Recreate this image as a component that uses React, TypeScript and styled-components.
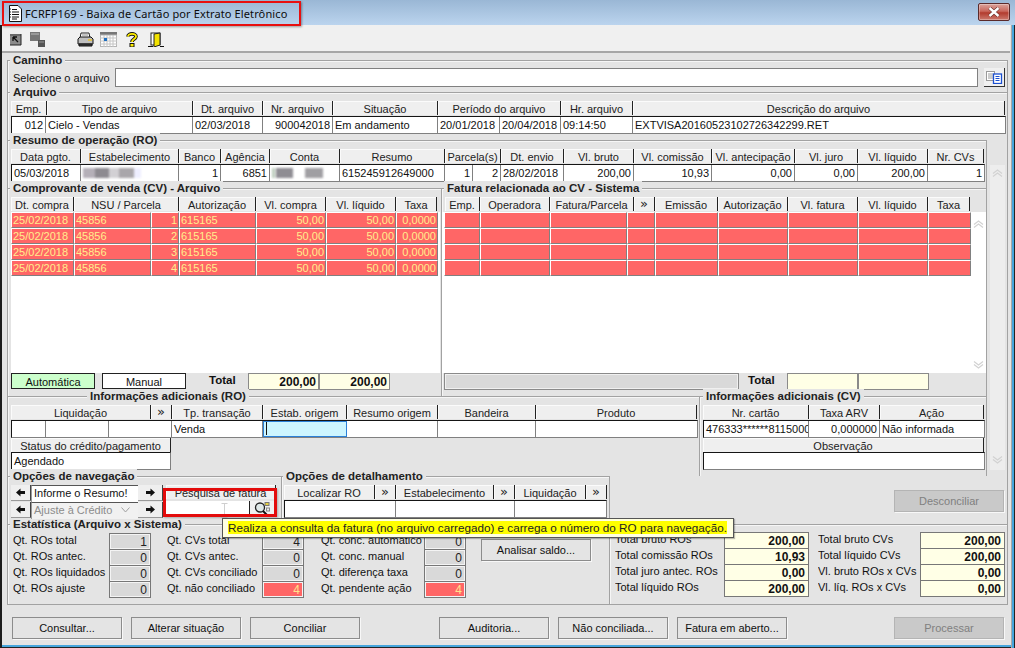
import React from "react";
import styled, { createGlobalStyle } from "styled-components";

const Global = createGlobalStyle`
  html, body { margin: 0; padding: 0; overflow: hidden; background: #e4e4e4; }
  body { font-family: "Liberation Sans", Arial, sans-serif; font-size: 11px; color: #111; }
  * { box-sizing: border-box; }
`;

const WindowFrame = styled.div`
  position: relative;
  width: 1015px;
  height: 648px;
  padding: 0 5px 3px 2px;
  background: #e4e4e4;
  overflow: hidden;
  box-shadow: inset 2px 0 #1c1c1c, inset -1px 0 #222, inset -3px 0 #45a5dc, inset -4px 0 #a8a8a8, inset 0 -1px #222, inset 0 -3px #45a5dc;
`;

const TitleBar = styled.div`
  display: flex;
  align-items: center;
  justify-content: space-between;
  height: 25px;
  margin: 0 -5px 0 -2px;
  padding: 0 5px 0 2px;
  background: linear-gradient(180deg, #9ab7d5, #bbd4ee);
`;

const TitleBox = styled.div`
  display: flex;
  align-items: center;
  gap: 3px;
  width: 299px;
  height: 25px;
  margin-top: 1px;
  padding-left: 4px;
  border: 2px solid #e81010;
  box-shadow: 1px 1px 2px rgba(0, 0, 0, 0.35);
  font-family: "Noto Sans", "Open Sans", sans-serif;
  font-size: 11px;
  letter-spacing: 0.12px;
  color: #0c0c0c;
  white-space: nowrap;
`;

const CloseButton = styled.div`
  display: flex;
  align-items: center;
  justify-content: center;
  width: 32px;
  height: 18px;
  margin-top: -1px;
  border: 1px solid #5b2a2a;
  border-radius: 2px;
  background: linear-gradient(180deg, #dba39b 0%, #c9675c 45%, #b23b2e 55%, #cc7a6e 100%);
  box-shadow: inset 0 0 0 1px rgba(255, 255, 255, 0.3);
`;

const Toolbar = styled.div`
  display: flex;
  align-items: center;
  height: 28px;
  padding-left: 7px;
  background: #f0f0f0;
  border-bottom: 2px solid #a6a6a6;
`;

const ToolSlot = styled.span<{ $gap: number }>`
  display: inline-flex;
  margin-left: ${(p) => p.$gap}px;
  margin-top: 2px;
`;

const Form = styled.div`
  padding: 7px 0 0 5px;
  width: 1006px;
`;

const Group = styled.div<{ $w?: number; $h: number; $l?: boolean; $r?: boolean; $b?: boolean }>`
  width: ${(p) => (p.$w ? `${p.$w}px` : "100%")};
  height: ${(p) => p.$h}px;
  flex: none;
  border-top: 1px solid #a2a2a2;
  border-left: ${(p) => (p.$l ? "1px solid #a2a2a2" : "0")};
  border-right: ${(p) => (p.$r ? "1px solid #a2a2a2" : "0")};
  border-bottom: ${(p) => (p.$b ? "1px solid #a2a2a2" : "0")};
  box-shadow: inset ${(p) => (p.$l ? "1px" : "0")} 1px #f6f6f6;
`;

const Legend = styled.div<{ $left?: number }>`
  display: block;
  width: fit-content;
  height: 14px;
  margin: -8px 0 0 ${(p) => p.$left ?? 2}px;
  padding: 0 3px;
  background: #e4e4e4;
  font-size: 11.5px;
  font-weight: 700;
  line-height: 14px;
  color: #222;
  white-space: nowrap;
`;

const GroupBody = styled.div<{ $x?: number }>`
  padding: 2px 0 0 ${(p) => p.$x ?? 3}px;
`;

const TotalsBody = styled.div`
  padding-left: 2px;
`;

const PathRow = styled.div`
  display: flex;
  align-items: center;
  padding: 1px 0 0 5px;
`;

const PathLabel = styled.span`
  width: 102px;
  white-space: nowrap;
`;

const PathInput = styled.div`
  width: 863px;
  height: 19px;
  background: #fff;
  border: 1px solid #808080;
`;

const PickButton = styled.div`
  display: flex;
  align-items: center;
  justify-content: center;
  width: 21px;
  height: 19px;
  margin-left: 6px;
  background: #f0f0f0;
  border-right: 1px solid #333;
  border-bottom: 1px solid #333;
`;

const HeadRow = styled.div<{ $cols: string }>`
  display: grid;
  grid-template-columns: ${(p) => p.$cols};
  height: 14px;
`;

const HeadCell = styled.div`
  height: 14px;
  overflow: hidden;
  background: #efefef;
  border-right: 1px solid #222;
  box-shadow: inset 1px 1px #fbfbfb;
  text-align: center;
  line-height: 16px;
  white-space: nowrap;
  color: #222;
`;

const MoreCell = styled(HeadCell)`
  font-family: "DejaVu Sans", sans-serif;
  font-size: 13px;
  line-height: 13px;
`;

const DataRow = styled.div<{ $cols: string; $mt?: number }>`
  display: grid;
  grid-template-columns: ${(p) => p.$cols};
  width: fit-content;
  height: 18px;
  margin-top: ${(p) => p.$mt ?? 1}px;
  background: #fff;
  border-top: 1px solid #151515;
  border-left: 1px solid #151515;
  border-right: 1px solid #808080;
  border-bottom: 1px solid #808080;
`;

const DataCell = styled.div<{ $right?: boolean }>`
  height: 16px;
  padding: 0 2px;
  overflow: hidden;
  border-right: 1px solid #808080;
  text-align: ${(p) => (p.$right ? "right" : "left")};
  line-height: 17px;
  white-space: nowrap;
  color: #111;
  &:last-child { border-right: 0; }
`;

const FocusCell = styled(DataCell)`
  background: #ccf5ff;
  outline: 1px solid #2a80d8;
  outline-offset: -1px;
  padding-left: 2px;
`;

const Caret = styled.span`
  display: block;
  width: 1px;
  height: 13px;
  margin: 1px 0 0 1px;
  background: #111;
`;

const Smear = styled.div<{ $w: number; $stops: string }>`
  width: ${(p) => p.$w}px;
  height: 10px;
  margin-top: 3px;
  background: linear-gradient(90deg, ${(p) => p.$stops});
  filter: blur(0.8px);
`;

const MainRow = styled.div`
  display: flex;
  height: 336px;
`;

const MainColumn = styled.div`
  display: flex;
  flex-direction: column;
  width: 980px;
`;

const SplitRow = styled.div`
  display: flex;
`;

const PageRail = styled.div`
  width: 21px;
  border-right: 1px solid #a2a2a2;
  padding: 25px 2px 0 2px;
`;

const PageTrack = styled.div`
  display: flex;
  flex-direction: column;
  justify-content: space-between;
  align-items: center;
  width: 15px;
  height: 305px;
  margin-left: 1px;
  padding: 4px 0 6px;
  background: #ededed;
`;

const ListArea = styled.div<{ $w: number }>`
  display: flex;
  justify-content: space-between;
  width: ${(p) => p.$w}px;
  height: 161px;
  margin-top: 1px;
  background: #fff;
`;

const ListRows = styled.div<{ $pad?: number }>`
  padding-left: ${(p) => p.$pad ?? 0}px;
`;

const ListRail = styled.div`
  display: flex;
  flex-direction: column;
  justify-content: space-between;
  align-items: center;
  width: 15px;
  padding: 8px 0 4px;
`;

const ListRow = styled.div<{ $cols: string }>`
  display: grid;
  grid-template-columns: ${(p) => p.$cols};
  height: 16px;
`;

const RedCell = styled.div<{ $right?: boolean }>`
  height: 16px;
  padding: 0 1px;
  overflow: hidden;
  background: #ff6666;
  border-style: solid;
  border-width: 1px;
  border-color: #fff #808080 #808080 #fff;
  color: #ffee8c;
  text-align: ${(p) => (p.$right ? "right" : "left")};
  line-height: 15px;
  white-space: nowrap;
`;

const TotalRow = styled.div`
  display: flex;
  align-items: flex-start;
  height: 17px;
`;

const Chip = styled.div<{ $on?: boolean }>`
  width: 84px;
  height: 16px;
  margin-right: 7px;
  background: ${(p) => (p.$on ? "#ccffcc" : "#fff")};
  border: 1px solid #222;
  text-align: center;
  line-height: 16px;
`;

const TotalLabel = styled.div<{ $ml: number }>`
  width: 39px;
  margin-left: ${(p) => p.$ml}px;
  font-size: 11.5px;
  font-weight: 700;
  line-height: 14px;
`;

const TotalValue = styled.div`
  width: 71px;
  height: 17px;
  padding-right: 2px;
  background: #ffffe6;
  border: 1px solid #8a8a8a;
  font-size: 12px;
  font-weight: 700;
  text-align: right;
  line-height: 16px;
`;

const GrayBar = styled.div`
  width: 295px;
  height: 17px;
  background: #d9d9d9;
  border: 1px solid #8a8a8a;
  box-shadow: inset 0 0 0 1px #f0f0f0;
`;

const BottomRow = styled.div`
  display: grid;
  grid-template-columns: 602px 399px;
`;

const BottomLeft = styled.div``;

const BottomRight = styled.div``;

const OptionsRow = styled.div`
  display: flex;
  height: 48px;
`;

const NavRow = styled.div`
  display: flex;
`;

const NavGrid = styled.div`
  display: grid;
  grid-template-columns: 20px 107px 25px;
  grid-auto-rows: 17px;
`;

const ArrowButton = styled.div`
  display: flex;
  align-items: center;
  justify-content: center;
  height: 16px;
  background: #efefef;
  border-right: 1px solid #444;
  border-bottom: 1px solid #999;
`;

const NavField = styled.div<{ $dim?: boolean }>`
  display: flex;
  align-items: center;
  justify-content: space-between;
  height: 17px;
  padding: 0 8px 2px 2px;
  background: ${(p) => (p.$dim ? "#f1f1f1" : "#fff")};
  border-top: 1px solid #555;
  border-left: 1px solid #999;
  color: ${(p) => (p.$dim ? "#8c8c8c" : "#111")};
  white-space: nowrap;
`;

const SearchBlock = styled.div`
  position: relative;
  width: 110px;
  margin-left: 3px;
`;

const SearchField = styled.div`
  display: grid;
  grid-template-columns: 84px 24px;
  height: 16px;
  margin-top: 2px;
  background: #fff;
`;

const SearchInput = styled.div`
  border-right: 1px solid #222;
`;

const SearchButton = styled.div`
  display: flex;
  align-items: center;
  justify-content: center;
  background: #f0f0f0;
`;

const RedOutline = styled.div`
  position: absolute;
  left: -3px;
  top: 3px;
  width: 114px;
  height: 29px;
  border: 3px solid #e30b0b;
  box-shadow: 1px 1px 2px rgba(0, 0, 0, 0.25);
`;

const Cursor = styled.span`
  position: absolute;
  left: 55px;
  top: 18px;
  display: inline-flex;
`;

const StatsBody = styled.div`
  display: flex;
  padding: 2px 0 0 5px;
`;

const StatColumn = styled.div<{ $gap?: number }>`
  margin-right: ${(p) => p.$gap ?? 0}px;
`;

const StatRow = styled.div<{ $label: number; $box: number }>`
  display: grid;
  grid-template-columns: ${(p) => p.$label}px ${(p) => p.$box}px;
  height: 16px;
`;

const StatLabel = styled.div`
  line-height: 14px;
  white-space: nowrap;
  overflow: hidden;
`;

const StatBox = styled.div<{ $hot?: boolean }>`
  height: 17px;
  padding-right: 3px;
  background: ${(p) => (p.$hot ? "#ff6666" : "#d9d9d9")};
  border: 1px solid #777;
  box-shadow: inset 0 0 0 1px #f4f4f4;
  color: ${(p) => (p.$hot ? "#ffe48c" : "#222")};
  font-size: 12px;
  text-align: right;
  line-height: 17px;
`;

const MoneyBox = styled.div`
  height: 17px;
  padding-right: 3px;
  background: #ffffe6;
  border: 1px solid #777;
  font-size: 12px;
  font-weight: 700;
  text-align: right;
  line-height: 17px;
`;

const Btn = styled.div<{ $off?: boolean; $w?: number; $ml?: number }>`
  width: ${(p) => p.$w ?? 110}px;
  height: 22px;
  flex: none;
  margin-left: ${(p) => p.$ml ?? 0}px;
  background: ${(p) => (p.$off ? "#c9c9c9" : "#e4e4e4")};
  border: 1px solid ${(p) => (p.$off ? "#b4b4b4" : "#8c8c8c")};
  box-shadow: 1px 1px #f8f8f8;
  color: ${(p) => (p.$off ? "#808080" : "#111")};
  text-align: center;
  line-height: 20px;
`;

const AnalyzeSlot = styled.div`
  padding-top: 6px;
`;

const RightTop = styled.div`
  height: 48px;
  padding: 14px 0 0 284px;
  border-left: 1px solid #a2a2a2;
  border-right: 1px solid #a2a2a2;
`;

const RightStats = styled.div`
  display: flex;
  padding: 7px 0 0 5px;
`;

const Footer = styled.div`
  display: flex;
  gap: 9px;
  padding: 12px 0 0 5px;
`;

const Tooltip = styled.div`
  position: absolute;
  left: 222px;
  top: 518px;
  width: 512px;
  height: 20px;
  padding: 2px 5px;
  background: #ffffe1;
  border: 1px solid #555;
  box-shadow: 1px 1px 1px rgba(0, 0, 0, 0.25);
  line-height: 14px;
  white-space: nowrap;
`;

const Highlight = styled.span`
  display: inline-block;
  height: 13px;
  background: #ffff00;
  color: #222;
  font-size: 11.7px;
  line-height: 14px;
`;

const cols = (xs: number[]) => xs.slice(1).map((x, i) => `${x - xs[i]}px`).join(" ");
const dcols = (xs: number[]) => {
  const w = xs.slice(1).map((x, i) => x - xs[i]);
  w[0] -= 1;
  w[w.length - 1] -= 1;
  return w.map((n) => `${n}px`).join(" ");
};

const Chevron = ({ up }: { up?: boolean }) => (
  <svg width="11" height="8" viewBox="0 0 11 8" fill="none" stroke="#d2d2d2" strokeWidth="1.2">
    {up ? (
      <>
        <path d="M1 4.5 L5.5 1 L10 4.5" />
        <path d="M1 7.5 L5.5 4 L10 7.5" />
      </>
    ) : (
      <>
        <path d="M1 0.5 L5.5 4 L10 0.5" />
        <path d="M1 3.5 L5.5 7 L10 3.5" />
      </>
    )}
  </svg>
);

const ArrowIcon = ({ left }: { left?: boolean }) => (
  <svg width="9" height="9" viewBox="0 0 9 9" fill="#111">
    {left ? <path d="M0 4.5 L4.5 0.5 V3 H9 V6 H4.5 V8.5 Z" /> : <path d="M9 4.5 L4.5 0.5 V3 H0 V6 H4.5 V8.5 Z" />}
  </svg>
);

const More = () => <MoreCell>»</MoreCell>;

const TitleDoc = () => (
  <svg width="14" height="17" viewBox="0 0 14 17" fill="#fff" stroke="#111">
    <path d="M1.5 .5 H10 L13.5 4 V16.5 H1.5 Z" />
    <path d="M4 4.5 H9 M4 7 H11 M4 9.5 H11 M4 12 H11 M4 14 H9" strokeWidth="1" />
    <path d="M2 4 H3 M2 7 H3 M2 9.5 H3 M2 12 H3" stroke="#333" />
  </svg>
);

const CloseGlyph = () => (
  <svg width="14" height="10" viewBox="0 0 14 10" fill="none">
    <path d="M2.5 1 L11.5 9 M11.5 1 L2.5 9" stroke="#5c2620" strokeWidth="3.6" />
    <path d="M2.5 1 L11.5 9 M11.5 1 L2.5 9" stroke="#fff" strokeWidth="2.4" />
  </svg>
);

const GotoIcon = () => (
  <svg width="13" height="14" viewBox="0 0 13 14">
    <rect x="1" y="2" width="11" height="11" fill="#8a8a8a" />
    <rect x="1" y="2" width="11" height="2" fill="#6a6a6a" />
    <path d="M12 2 V13 H1" stroke="#222" fill="none" />
    <path d="M4 5 L9 10 M4 5 H8 M4 5 V9" stroke="#111" strokeWidth="1.3" fill="none" />
  </svg>
);

const CascadeIcon = () => (
  <svg width="16" height="15" viewBox="0 0 16 15">
    <rect x="0" y="0" width="10" height="9" fill="#777" />
    <rect x="1" y="1" width="8" height="2" fill="#999" />
    <rect x="8" y="8" width="7" height="7" fill="#555" />
    <rect x="9" y="9" width="5" height="2" fill="#777" />
  </svg>
);

const PrinterIcon = () => (
  <svg width="17" height="15" viewBox="0 0 17 15">
    <path d="M4 1 H12 L13 6 H3 Z" fill="#fff" stroke="#222" />
    <path d="M1 7 L3 5 H14 L16 7 V12 H1 Z" fill="#bfbfbf" stroke="#111" />
    <path d="M2 12 H15 V14 H2 Z" fill="#444" stroke="#111" />
    <path d="M11 8 H15" stroke="#e8c020" strokeWidth="1.4" />
    <path d="M5 3 H11" stroke="#888" />
  </svg>
);

const CalendarIcon = () => (
  <svg width="17" height="15" viewBox="0 0 17 15">
    <rect x="0" y="0" width="17" height="3" fill="#777" />
    <rect x="0.5" y="3" width="16" height="11.5" fill="#fff" stroke="#b4b4b4" />
    <path d="M4 3 V15 M7 3 V15 M10 3 V15 M13 3 V15 M0 6 H17 M0 9 H17 M0 12 H17" stroke="#c4c4c4" />
    <rect x="4" y="6" width="3" height="3" fill="#1e6fc0" />
  </svg>
);

const HelpIcon = () => (
  <svg width="12" height="15" viewBox="0 0 12 15" fill="none">
    <path d="M2 4.5 C2 1 10 1 10 4.5 C10 7 6 7 6 10" stroke="#111" strokeWidth="3.6" />
    <path d="M2 4.5 C2 1 10 1 10 4.5 C10 7 6 7 6 10" stroke="#ffee00" strokeWidth="1.8" />
    <rect x="4" y="11.5" width="4" height="3.5" fill="#ffee00" stroke="#111" />
  </svg>
);

const DoorIcon = () => (
  <svg width="16" height="15" viewBox="0 0 16 15">
    <rect x="3" y="1" width="9" height="12" fill="#fff" stroke="#222" />
    <path d="M6 2 L12 1 V13 L6 15 Z" fill="#f2e200" stroke="#222" />
    <path d="M0 14.5 H5 M12 14.5 H16" stroke="#111" />
  </svg>
);

const ListsIcon = () => (
  <svg width="17" height="13" viewBox="0 0 17 13">
    <rect x="0.5" y="0.5" width="8" height="9" fill="#fff" stroke="#9a9a9a" />
    <path d="M2 3 H7 M2 5 H7 M2 7 H7" stroke="#9a9a9a" />
    <rect x="7.5" y="3" width="8" height="9.5" fill="#fff" stroke="#1b4fd0" strokeWidth="1.3" />
    <path d="M9.5 5.5 H13.5 M9.5 7.5 H13.5 M9.5 9.5 H13.5" stroke="#1b4fd0" />
  </svg>
);

const LensIcon = () => (
  <svg width="16" height="14" viewBox="0 0 16 14" fill="none">
    <circle cx="6" cy="5.5" r="4.5" fill="#dfe8e8" stroke="#222" strokeWidth="1.3" />
    <path d="M9 9 L13 13" stroke="#111" strokeWidth="2" />
    <rect x="11" y="0.5" width="4" height="3" fill="#e8d040" stroke="#777" />
    <rect x="12.5" y="6" width="3" height="3" fill="#eee" stroke="#888" />
  </svg>
);

const BeamIcon = () => (
  <svg width="7" height="15" viewBox="0 0 7 15" fill="none" stroke="#cfcfcf">
    <path d="M0.5 .5 H6.5 M3.5 .5 V14.5 M0.5 14.5 H6.5" />
  </svg>
);

const arquivoHead = [11, 47, 193, 263, 333, 438, 561, 633, 1005];
const arquivoData = [11, 46, 193, 263, 333, 438, 500, 561, 633, 1006];
const resumoHead = [11, 81, 179, 221, 270, 340, 445, 501, 564, 634, 712, 795, 858, 928, 984];
const resumoData = [11, 81, 179, 221, 270, 340, 445, 473, 501, 564, 634, 712, 795, 858, 928, 985];
const cvHead = [11, 74, 179, 256, 326, 396, 437];
const cvRow = [11, 74, 151, 179, 256, 326, 396, 438];
const fatHead = [445, 480, 550, 634, 655, 718, 788, 858, 928, 970];
const fatRow = [0, 36, 106, 183, 211, 274, 344, 414, 484, 527];
const roHead = [11, 151, 172, 263, 347, 438, 536, 697];
const roData = [11, 46, 109, 172, 263, 347, 438, 536, 698];
const cvInfoHead = [703, 809, 880, 984];
const cvInfoData = [703, 809, 880, 985];
const detHead = [284, 375, 396, 494, 515, 586, 607];
const detData = [284, 396, 515, 607];

const qt1 = [["Qt. ROs total", "1"], ["Qt. ROs antec.", "0"], ["Qt. ROs liquidados", "0"], ["Qt. ROs ajuste", "0"]];
const qt2 = [["Qt. CVs total", "4"], ["Qt. CVs antec.", "0"], ["Qt. CVs conciliado", "0"], ["Qt. não conciliado", "4", "hot"]];
const qt3 = [["Qt. conc. automático", "0"], ["Qt. conc. manual", "0"], ["Qt. diferença taxa", "0"], ["Qt. pendente ação", "4", "hot"]];
const tot1 = [["Total bruto ROs", "200,00"], ["Total comissão ROs", "10,93"], ["Total juro antec. ROs", "0,00"], ["Total líquido ROs", "200,00"]];
const tot2 = [["Total bruto CVs", "200,00"], ["Total líquido CVs", "200,00"], ["Vl. bruto ROs x CVs", "0,00"], ["Vl. líq. ROs x CVs", "0,00"]];

const Stats = ({ rows, label }: { rows: string[][]; label: number }) => (
  <>
    {rows.map(([l, v, hot]) => (
      <StatRow key={l} $label={label} $box={42}>
        <StatLabel>{l}</StatLabel>
        <StatBox $hot={!!hot}>{v}</StatBox>
      </StatRow>
    ))}
  </>
);

const Money = ({ rows, label, box }: { rows: string[][]; label: number; box: number }) => (
  <>
    {rows.map(([l, v]) => (
      <StatRow key={l} $label={label} $box={box}>
        <StatLabel>{l}</StatLabel>
        <MoneyBox>{v}</MoneyBox>
      </StatRow>
    ))}
  </>
);

export default function App() {
  return (
    <WindowFrame>
      <Global />
      <TitleBar>
        <TitleBox>
          <TitleDoc />
          <span>FCRFP169 - Baixa de Cartão por Extrato Eletrônico</span>
        </TitleBox>
        <CloseButton>
          <CloseGlyph />
        </CloseButton>
      </TitleBar>
      <Toolbar>
        <ToolSlot $gap={0}><GotoIcon /></ToolSlot>
        <ToolSlot $gap={8}><CascadeIcon /></ToolSlot>
        <ToolSlot $gap={31}><PrinterIcon /></ToolSlot>
        <ToolSlot $gap={6}><CalendarIcon /></ToolSlot>
        <ToolSlot $gap={9}><HelpIcon /></ToolSlot>
        <ToolSlot $gap={10}><DoorIcon /></ToolSlot>
      </Toolbar>

      <Form>
        <Group $h={32} $l $r>
          <Legend>Caminho</Legend>
          <PathRow>
            <PathLabel>Selecione o arquivo</PathLabel>
            <PathInput />
            <PickButton><ListsIcon /></PickButton>
          </PathRow>
        </Group>

        <Group $h={48} $l $r>
          <Legend>Arquivo</Legend>
          <GroupBody>
            <HeadRow $cols={cols(arquivoHead)}>
              {["Emp.", "Tipo de arquivo", "Dt. arquivo", "Nr. arquivo", "Situação", "Período do arquivo", "Hr. arquivo", "Descrição do arquivo"].map((t) => (
                <HeadCell key={t}>{t}</HeadCell>
              ))}
            </HeadRow>
            <DataRow $cols={dcols(arquivoData)}>
              <DataCell $right>012</DataCell>
              <DataCell>Cielo - Vendas</DataCell>
              <DataCell>02/03/2018</DataCell>
              <DataCell $right>900042018</DataCell>
              <DataCell>Em andamento</DataCell>
              <DataCell>20/01/2018</DataCell>
              <DataCell>20/04/2018</DataCell>
              <DataCell>09:14:50</DataCell>
              <DataCell>EXTVISA20160523102726342299.RET</DataCell>
            </DataRow>
          </GroupBody>
        </Group>

        <MainRow>
          <MainColumn>
            <Group $h={48} $l $r>
              <Legend>Resumo de operação (RO)</Legend>
              <GroupBody>
                <HeadRow $cols={cols(resumoHead)}>
                  {["Data pgto.", "Estabelecimento", "Banco", "Agência", "Conta", "Resumo", "Parcela(s)", "Dt. envio", "Vl. bruto", "Vl. comissão", "Vl. antecipação", "Vl. juro", "Vl. líquido", "Nr. CVs"].map((t) => (
                    <HeadCell key={t}>{t}</HeadCell>
                  ))}
                </HeadRow>
                <DataRow $cols={dcols(resumoData)}>
                  <DataCell>05/03/2018</DataCell>
                  <DataCell><Smear $w={58} $stops="#b5b0b8 0 20%, #8d8a90 20% 45%, #d2d0d4 45% 62%, #a9a6aa 62% 88%, #eef 88% 100%" /></DataCell>
                  <DataCell $right>1</DataCell>
                  <DataCell $right>6851</DataCell>
                  <DataCell><Smear $w={55} $stops="#bcb 0 5%, #fff 5% 8%, #8f8d93 8% 38%, #fff 38% 60%, #a09fa3 60% 92%, #fff 92%" /></DataCell>
                  <DataCell>615245912649000</DataCell>
                  <DataCell $right>1</DataCell>
                  <DataCell $right>2</DataCell>
                  <DataCell>28/02/2018</DataCell>
                  <DataCell $right>200,00</DataCell>
                  <DataCell $right>10,93</DataCell>
                  <DataCell $right>0,00</DataCell>
                  <DataCell $right>0,00</DataCell>
                  <DataCell $right>200,00</DataCell>
                  <DataCell $right>1</DataCell>
                </DataRow>
              </GroupBody>
            </Group>

            <SplitRow>
              <Group $w={434} $h={208} $l>
                <Legend>Comprovante de venda (CV) - Arquivo</Legend>
                <GroupBody>
                  <HeadRow $cols={cols(cvHead)}>
                    {["Dt. compra", "NSU / Parcela", "Autorização", "Vl. compra", "Vl. líquido", "Taxa"].map((t) => (
                      <HeadCell key={t}>{t}</HeadCell>
                    ))}
                  </HeadRow>
                  <ListArea $w={429}>
                    <ListRows>
                      {[1, 2, 3, 4].map((n) => (
                        <ListRow key={n} $cols={cols(cvRow)}>
                          <RedCell>25/02/2018</RedCell>
                          <RedCell>45856</RedCell>
                          <RedCell $right>{n}</RedCell>
                          <RedCell>615165</RedCell>
                          <RedCell $right>50,00</RedCell>
                          <RedCell $right>50,00</RedCell>
                          <RedCell $right>0,0000</RedCell>
                        </ListRow>
                      ))}
                    </ListRows>
                  </ListArea>
                  <TotalRow>
                    <Chip $on>Automática</Chip>
                    <Chip>Manual</Chip>
                    <TotalLabel $ml={16}>Total</TotalLabel>
                    <TotalValue>200,00</TotalValue>
                    <TotalValue>200,00</TotalValue>
                  </TotalRow>
                </GroupBody>
              </Group>

              <Group $w={546} $h={208} $l $r>
                <Legend>Fatura relacionada ao CV - Sistema</Legend>
                <GroupBody $x={3}>
                  <HeadRow $cols={cols(fatHead)}>
                    <HeadCell>Emp.</HeadCell>
                    <HeadCell>Operadora</HeadCell>
                    <HeadCell>Fatura/Parcela</HeadCell>
                    <More />
                    <HeadCell>Emissão</HeadCell>
                    <HeadCell>Autorização</HeadCell>
                    <HeadCell>Vl. fatura</HeadCell>
                    <HeadCell>Vl. líquido</HeadCell>
                    <HeadCell>Taxa</HeadCell>
                  </HeadRow>
                </GroupBody>
                <ListArea $w={544}>
                  <ListRows $pad={2}>
                    {[1, 2, 3, 4].map((n) => (
                      <ListRow key={n} $cols={cols(fatRow)}>
                        {fatRow.slice(1).map((x) => (
                          <RedCell key={x} />
                        ))}
                      </ListRow>
                    ))}
                  </ListRows>
                  <ListRail>
                    <Chevron up />
                    <Chevron />
                  </ListRail>
                </ListArea>
                <TotalsBody>
                  <TotalRow>
                    <GrayBar />
                    <TotalLabel $ml={9}>Total</TotalLabel>
                    <TotalValue />
                    <TotalValue />
                  </TotalRow>
                </TotalsBody>
              </Group>
            </SplitRow>

            <SplitRow>
              <Group $w={692} $h={80} $l>
                <Legend $left={79}>Informações adicionais (RO)</Legend>
                <GroupBody>
                  <HeadRow $cols={cols(roHead)}>
                    <HeadCell>Liquidação</HeadCell>
                    <More />
                    <HeadCell>Tp. transação</HeadCell>
                    <HeadCell>Estab. origem</HeadCell>
                    <HeadCell>Resumo origem</HeadCell>
                    <HeadCell>Bandeira</HeadCell>
                    <HeadCell>Produto</HeadCell>
                  </HeadRow>
                  <DataRow $cols={dcols(roData)}>
                    <DataCell />
                    <DataCell />
                    <DataCell />
                    <DataCell>Venda</DataCell>
                    <FocusCell><Caret /></FocusCell>
                    <DataCell />
                    <DataCell />
                    <DataCell />
                  </DataRow>
                  <HeadRow $cols="160px">
                    <HeadCell>Status do crédito/pagamento</HeadCell>
                  </HeadRow>
                  <DataRow $cols="158px" $mt={0}>
                    <DataCell>Agendado</DataCell>
                  </DataRow>
                </GroupBody>
              </Group>
              <Group $w={288} $h={80} $l $r>
                <Legend $left={3}>Informações adicionais (CV)</Legend>
                <GroupBody>
                  <HeadRow $cols={cols(cvInfoHead)}>
                    <HeadCell>Nr. cartão</HeadCell>
                    <HeadCell>Taxa ARV</HeadCell>
                    <HeadCell>Ação</HeadCell>
                  </HeadRow>
                  <DataRow $cols={dcols(cvInfoData)}>
                    <DataCell>476333******8115000</DataCell>
                    <DataCell $right>0,000000</DataCell>
                    <DataCell>Não informada</DataCell>
                  </DataRow>
                  <HeadRow $cols="281px">
                    <HeadCell>Observação</HeadCell>
                  </HeadRow>
                  <DataRow $cols="280px" $mt={0} />
                </GroupBody>
              </Group>
            </SplitRow>
          </MainColumn>
          <PageRail>
            <PageTrack>
              <Chevron up />
              <Chevron />
            </PageTrack>
          </PageRail>
        </MainRow>

        <BottomRow>
          <BottomLeft>
            <OptionsRow>
              <Group $w={274} $h={48} $l>
                <Legend>Opções de navegação</Legend>
                <GroupBody>
                  <NavRow>
                    <NavGrid>
                      <ArrowButton><ArrowIcon left /></ArrowButton>
                      <NavField>Informe o Resumo!</NavField>
                      <ArrowButton><ArrowIcon /></ArrowButton>
                      <ArrowButton><ArrowIcon left /></ArrowButton>
                      <NavField $dim>
                        Ajuste à Crédito
                        <svg width="9" height="6" viewBox="0 0 9 6" fill="none" stroke="#a0a0a0"><path d="M.5 .5 L4.5 5 L8.5 .5" /></svg>
                      </NavField>
                      <ArrowButton><ArrowIcon /></ArrowButton>
                    </NavGrid>
                    <SearchBlock>
                      <HeadRow $cols="110px">
                        <HeadCell>Pesquisa de fatura</HeadCell>
                      </HeadRow>
                      <SearchField>
                        <SearchInput />
                        <SearchButton><LensIcon /></SearchButton>
                      </SearchField>
                      <Cursor><BeamIcon /></Cursor>
                      <RedOutline />
                    </SearchBlock>
                  </NavRow>
                </GroupBody>
              </Group>
              <Group $w={328} $h={48} $l>
                <Legend $left={1}>Opções de detalhamento</Legend>
                <GroupBody $x={2}>
                  <HeadRow $cols={cols(detHead)}>
                    <HeadCell>Localizar RO</HeadCell>
                    <More />
                    <HeadCell>Estabelecimento</HeadCell>
                    <More />
                    <HeadCell>Liquidação</HeadCell>
                    <More />
                  </HeadRow>
                  <DataRow $cols={dcols(detData)}>
                    <DataCell />
                    <DataCell />
                    <DataCell />
                  </DataRow>
                </GroupBody>
              </Group>
            </OptionsRow>
            <Group $h={81} $l $b>
              <Legend>Estatística (Arquivo x Sistema)</Legend>
              <StatsBody>
                <StatColumn $gap={16}><Stats rows={qt1} label={96} /></StatColumn>
                <StatColumn $gap={17}><Stats rows={qt2} label={95} /></StatColumn>
                <StatColumn $gap={15}><Stats rows={qt3} label={103} /></StatColumn>
                <AnalyzeSlot><Btn>Analisar saldo...</Btn></AnalyzeSlot>
              </StatsBody>
            </Group>
          </BottomLeft>
          <BottomRight>
            <RightTop>
              <Btn $off>Desconciliar</Btn>
            </RightTop>
            <Group $h={81} $l $r $b>
              <RightStats>
                <StatColumn $gap={9}><Money rows={tot1} label={109} box={85} /></StatColumn>
                <StatColumn><Money rows={tot2} label={102} box={85} /></StatColumn>
              </RightStats>
            </Group>
          </BottomRight>
        </BottomRow>

        <Footer>
          <Btn>Consultar...</Btn>
          <Btn>Alterar situação</Btn>
          <Btn>Conciliar</Btn>
          <Btn $ml={70}>Auditoria...</Btn>
          <Btn>Não conciliada...</Btn>
          <Btn>Fatura em aberto...</Btn>
          <Btn $off $ml={98}>Processar</Btn>
        </Footer>
      </Form>

      <Tooltip>
        <Highlight>Realiza a consulta da fatura (no arquivo carregado) e carrega o número do RO para navegação.</Highlight>
      </Tooltip>
    </WindowFrame>
  );
}
